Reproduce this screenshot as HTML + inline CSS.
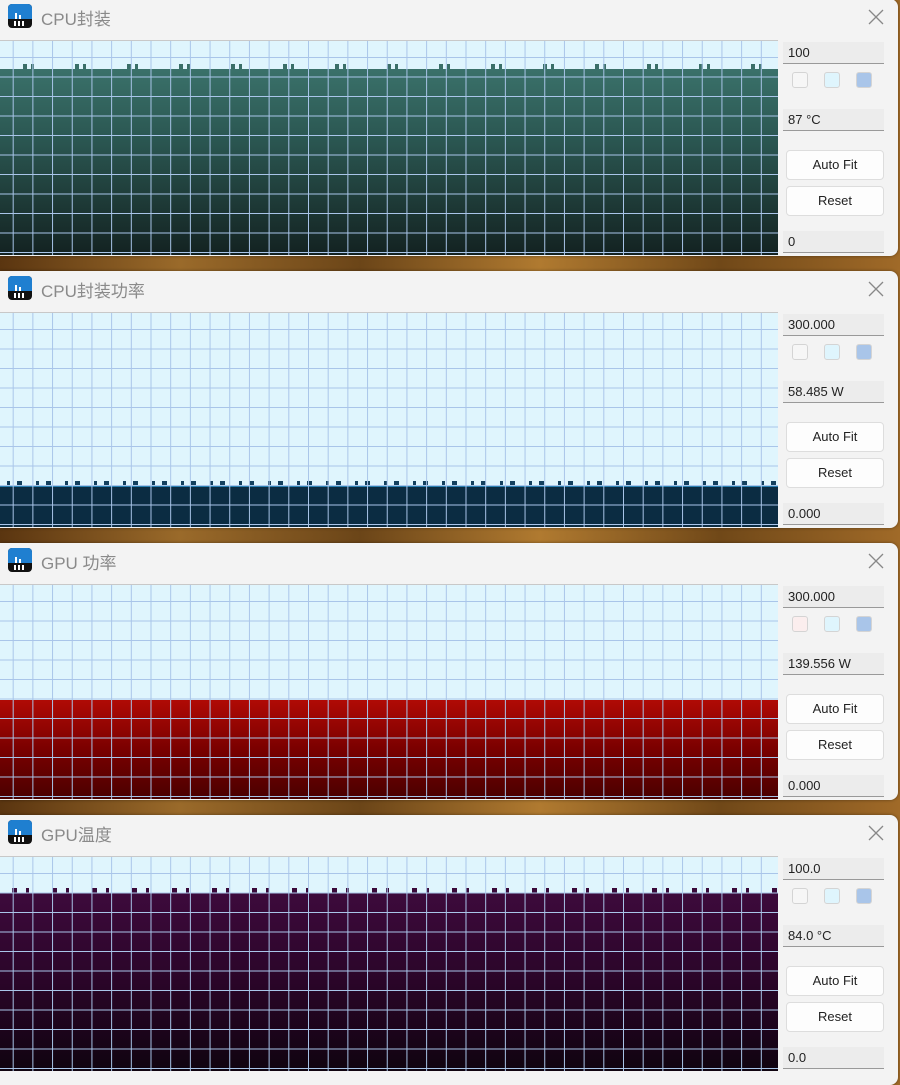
<!DOCTYPE html>
<html><head><meta charset="utf-8"><style>
*{margin:0;padding:0;box-sizing:border-box}
body{width:900px;height:1077px;overflow:hidden;position:relative;background:linear-gradient(90deg,#5a3510,#9a6a2a 20%,#6b4518 40%,#b07a30 60%,#704818 80%,#a06a28);font-family:"Liberation Sans","Noto Sans CJK SC",sans-serif}
.win{position:absolute;left:0;width:898px;height:257px;background:#f3f3f3;border-radius:0 8px 8px 0;box-shadow:0 0 3px rgba(0,0,0,.4);overflow:hidden}
.title{position:absolute;left:41px;top:6px;font-size:17px;color:#8a8a8a}
.icon{position:absolute;left:8px;top:5px}
.x{position:absolute;left:868px;top:10px}
.plot{position:absolute;left:0;top:41px;width:778px;height:215px;background:#dff5fd;overflow:hidden;border-top:1px solid #c8c8c8}
.fill{position:absolute;left:0;right:0;bottom:0}
.sp{position:absolute;left:0;right:0;height:6px}
.grid{position:absolute;inset:0;background-image:linear-gradient(90deg,#a9c5e9 1px,transparent 1px),linear-gradient(#a9c5e9 1px,transparent 1px);background-size:19.7px 19.5px;background-position:12.7px 16px}
.box{position:absolute;left:783px;width:101px;height:22px;background:#ececec;border-bottom:1px solid #999;font-size:13px;color:#222;padding:3px 5px}
.cb{position:absolute;width:16px;height:16px;border-radius:3px;border:1px solid #d4d4d4}
.btn{position:absolute;left:786px;width:98px;height:30px;background:#fdfdfd;border:1px solid #ddd;border-radius:4px;font-size:13px;color:#222;text-align:center;line-height:28px}
</style></head><body>

<div class="win" style="top:-1px">
<svg class="icon" width="24" height="24" viewBox="0 0 24 24"><rect width="24" height="24" rx="4" fill="#111"/><path d="M4 0h16a4 4 0 0 1 4 4v11H0V4a4 4 0 0 1 4-4z" fill="#1f7fd0"/><path d="M5 5v10h2V9h2v6h2v-4h2v4H5z" fill="#fff"/><path d="M7 17v5M11 17v5M15 17v5" stroke="#fff" stroke-width="2"/></svg>
<div class="title">CPU封装</div><svg class="x" width="16" height="16"><path d="M1 1L15 15M15 1L1 15" stroke="#888" stroke-width="1.3"/></svg>
<div class="plot">
<div class="sp" style="top:23px;background:repeating-linear-gradient(90deg,transparent 0 23px,#3a6f68 23px 27px,transparent 27px 31px,#3a6f68 31px 34px,transparent 34px 52px)"></div>
<div class="fill" style="height:186px;background:linear-gradient(#3a716a,#2a5550 40%,#132221)"></div>
<div class="grid"></div></div>
<div class="box" style="top:43px">100</div>
<div class="cb" style="left:792px;top:73px;background:#f6f6f6"></div>
<div class="cb" style="left:824px;top:73px;background:#dff5fd"></div>
<div class="cb" style="left:856px;top:73px;background:#a9c5e9"></div>
<div class="box" style="top:110px">87 °C</div>
<div class="btn" style="top:151px">Auto Fit</div>
<div class="btn" style="top:187px">Reset</div>
<div class="box" style="top:232px">0</div>
</div>

<div class="win" style="top:271px">
<svg class="icon" width="24" height="24" viewBox="0 0 24 24"><rect width="24" height="24" rx="4" fill="#111"/><path d="M4 0h16a4 4 0 0 1 4 4v11H0V4a4 4 0 0 1 4-4z" fill="#1f7fd0"/><path d="M5 5v10h2V9h2v6h2v-4h2v4H5z" fill="#fff"/><path d="M7 17v5M11 17v5M15 17v5" stroke="#fff" stroke-width="2"/></svg>
<div class="title">CPU封装功率</div><svg class="x" width="16" height="16"><path d="M1 1L15 15M15 1L1 15" stroke="#888" stroke-width="1.3"/></svg>
<div class="plot">
<div class="sp" style="top:168px;background:repeating-linear-gradient(90deg,transparent 0 7px,#13405e 7px 10px,transparent 10px 17px,#13405e 17px 22px,transparent 22px 29px)"></div>
<div class="fill" style="height:41px;background:#0b2c42;border-top:1px solid #2a7fb0"></div>
<div class="grid"></div></div>
<div class="box" style="top:43px">300.000</div>
<div class="cb" style="left:792px;top:73px;background:#f6f6f6"></div>
<div class="cb" style="left:824px;top:73px;background:#dff5fd"></div>
<div class="cb" style="left:856px;top:73px;background:#a9c5e9"></div>
<div class="box" style="top:110px">58.485 W</div>
<div class="btn" style="top:151px">Auto Fit</div>
<div class="btn" style="top:187px">Reset</div>
<div class="box" style="top:232px">0.000</div>
</div>

<div class="win" style="top:543px">
<svg class="icon" width="24" height="24" viewBox="0 0 24 24"><rect width="24" height="24" rx="4" fill="#111"/><path d="M4 0h16a4 4 0 0 1 4 4v11H0V4a4 4 0 0 1 4-4z" fill="#1f7fd0"/><path d="M5 5v10h2V9h2v6h2v-4h2v4H5z" fill="#fff"/><path d="M7 17v5M11 17v5M15 17v5" stroke="#fff" stroke-width="2"/></svg>
<div class="title">GPU 功率</div><svg class="x" width="16" height="16"><path d="M1 1L15 15M15 1L1 15" stroke="#888" stroke-width="1.3"/></svg>
<div class="plot">
<div class="fill" style="height:99px;background:linear-gradient(#b00a05,#7a0000 50%,#4a0000)"></div>
<div class="grid"></div></div>
<div class="box" style="top:43px">300.000</div>
<div class="cb" style="left:792px;top:73px;background:#fbeeee"></div>
<div class="cb" style="left:824px;top:73px;background:#dff5fd"></div>
<div class="cb" style="left:856px;top:73px;background:#a9c5e9"></div>
<div class="box" style="top:110px">139.556 W</div>
<div class="btn" style="top:151px">Auto Fit</div>
<div class="btn" style="top:187px">Reset</div>
<div class="box" style="top:232px">0.000</div>
</div>

<div class="win" style="top:815px;height:270px">
<svg class="icon" width="24" height="24" viewBox="0 0 24 24"><rect width="24" height="24" rx="4" fill="#111"/><path d="M4 0h16a4 4 0 0 1 4 4v11H0V4a4 4 0 0 1 4-4z" fill="#1f7fd0"/><path d="M5 5v10h2V9h2v6h2v-4h2v4H5z" fill="#fff"/><path d="M7 17v5M11 17v5M15 17v5" stroke="#fff" stroke-width="2"/></svg>
<div class="title">GPU温度</div><svg class="x" width="16" height="16"><path d="M1 1L15 15M15 1L1 15" stroke="#888" stroke-width="1.3"/></svg>
<div class="plot">
<div class="sp" style="top:31px;background:repeating-linear-gradient(90deg,transparent 0 12px,#3a0a3a 12px 17px,transparent 17px 26px,#3a0a3a 26px 29px,transparent 29px 40px)"></div>
<div class="fill" style="height:178px;background:linear-gradient(#3d0a3c,#2a0528 50%,#100410)"></div>
<div class="grid"></div></div>
<div class="box" style="top:43px">100.0</div>
<div class="cb" style="left:792px;top:73px;background:#f6f6f6"></div>
<div class="cb" style="left:824px;top:73px;background:#dff5fd"></div>
<div class="cb" style="left:856px;top:73px;background:#a9c5e9"></div>
<div class="box" style="top:110px">84.0 °C</div>
<div class="btn" style="top:151px">Auto Fit</div>
<div class="btn" style="top:187px">Reset</div>
<div class="box" style="top:232px">0.0</div>
</div>
</body></html>
